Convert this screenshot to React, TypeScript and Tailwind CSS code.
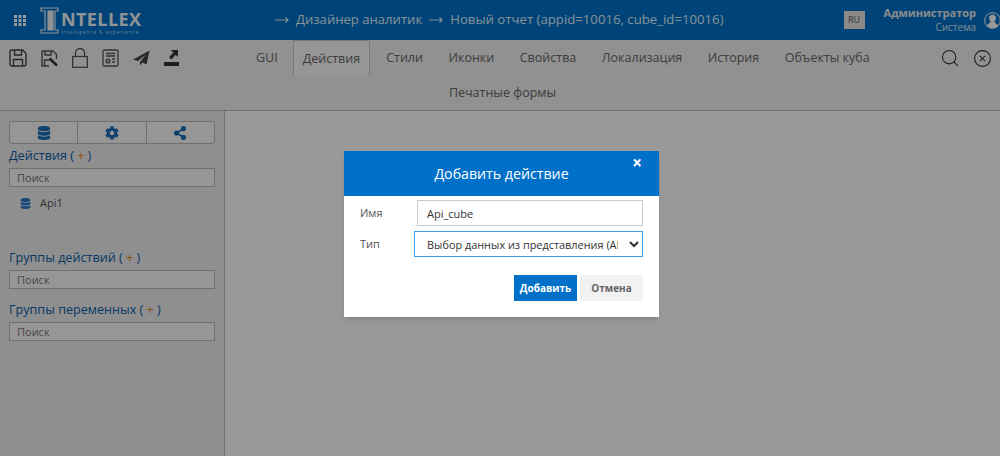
import React from "react";
import { Search, CircleX } from "lucide-react";
import { FaCog, FaDatabase, FaShareAlt } from "react-icons/fa";

const tabs = ["Стили", "Иконки", "Свойства", "Локализация", "История", "Объекты куба"];

const Arrow = () => (
    <svg width="14" height="8" viewBox="0 0 14 8" fill="none" stroke="currentColor" strokeWidth="1.2">
        <path d="M0 4h13M10.500 1.500 13 4l-2.500 2.500" />
    </svg>
);

const GridIcon = () => (
    <svg width="12" height="11" viewBox="0 0 12 11" fill="#fff">
        {[0, 4, 8].map((y) =>
            [0, 4.5, 9].map((x) => <rect key={`${x}-${y}`} x={x} y={y} width="3" height="3" />),
        )}
    </svg>
);

const Logo = () => (
    <div className="flex items-start h-[28px] w-[102px] shrink-0 text-white">
        <svg width="20" height="28" viewBox="0 0 20 28" fill="none" stroke="#eef4f8" strokeWidth="1.200" className="shrink-0">
            <path d="M1 2h17v3h-3v19h3v3H1v-3h4V5H1z" />
            <path d="M8 5h5v19H8z" fill="#eef4f8" />
        </svg>
        <div className="ml-[1px] flex flex-col items-start">
            <span className="text-[18px] leading-[19px] mt-[4px] font-bold tracking-[0.400px] text-[#f2f5f7]">NTELLEX</span>
            <span className="text-[5.500px] leading-[6px] tracking-[0.550px] text-[#9fd0f0] whitespace-nowrap">
                Intelligence &amp; experience
            </span>
        </div>
    </div>
);

const SaveIcon = () => (
    <svg width="18" height="18" viewBox="0 0 18 18" fill="none" stroke="#444" strokeWidth="1.400">
        <path d="M2.500 1h11L17 4.500V15a2 2 0 0 1-2 2H3a2 2 0 0 1-2-2V2.500A1.500 1.500 0 0 1 2.500 1z" />
        <path d="M5.500 1v5h7V1M4.500 17v-6.500h9V17" />
    </svg>
);

const SaveEditIcon = () => (
    <svg width="17" height="17" viewBox="0 0 17 17" fill="none" stroke="#555" strokeWidth="1.400">
        <path d="M1 1h11l3.500 3.500V9M8 16H1V1" />
        <path d="M4 1v4h6V1" />
        <path d="M3.500 16v-6h5" />
        <path d="m8.500 8.500 7.500 7" strokeWidth="2.600" stroke="#333" />
    </svg>
);

const LockIcon = () => (
    <svg width="16" height="20" viewBox="0 0 16 20" fill="none" stroke="#555" strokeWidth="1.300">
        <rect x="0.700" y="8.500" width="14.600" height="10.800" />
        <path d="M3.500 8.500V5a4.500 4.500 0 0 1 9 0v3.500" />
    </svg>
);

const DocGearIcon = () => (
    <svg width="17" height="18" viewBox="0 0 17 18" fill="none" stroke="#555" strokeWidth="1.300">
        <rect x="1" y="1" width="15" height="16" rx="1.500" />
        <path d="M4 4.500h9M4 7h9M10 10h3M10 13h3" />
        <circle cx="6" cy="12" r="1.800" strokeWidth="1.500" />
    </svg>
);

const PlaneIcon = () => (
    <svg width="17" height="16" viewBox="0 0 17 16" fill="#444">
        <path d="M16.500 0.500 0 9.500l5 1.500L13 4.500 7 12v3.500l2.500-3 4 2z" />
    </svg>
);

const ExportIcon = () => (
    <svg width="15" height="16" viewBox="0 0 15 16" fill="#333">
        <rect x="0" y="12" width="15" height="4" />
        <path d="M6.500 0H14v7l-2.300-2.300L7.500 9.500 5 7l4.500-4.400z" />
    </svg>
);

const SearchField = () => (
    <input
        readOnly
        placeholder="Поиск"
        className="block w-[206px] h-[19px] border border-[#bbb] bg-[#fbfbfb] px-[7px] text-[11px] placeholder:text-[#777] outline-none"
    />
);

const Heading: React.FC<{ title: string }> = ({ title }) => (
    <div className="text-[12.600px] leading-[18px] text-[#0a5fa8]">
        {title} ( <span className="text-[#e68a1f]">+</span> )
    </div>
);

export default function App() {
    return (
        <div className="relative w-[1000px] h-[456px] overflow-hidden bg-[#f2f2f2] font-['Open_Sans',sans-serif]">
            <header className="flex items-center h-10 bg-[#0070c8] text-white">
                <div className="ml-[14px] mr-[14px] flex">
                    <GridIcon />
                </div>
                <Logo />
                <div className="ml-[133px] shrink-0 flex items-center gap-[7px] whitespace-nowrap text-[#dff0fb]">
                    <Arrow />
                    <span className="text-[13.100px]">Дизайнер аналитик</span>
                    <Arrow />
                    <span className="text-[13.200px]">Новый отчет (appid=10016, cube_id=10016)</span>
                </div>
                <span className="ml-[120px] shrink-0 flex items-center justify-center w-[21px] h-[18px] bg-[#e6e6e6] text-[#555] text-[9px]">
                    RU
                </span>
                <div className="ml-[19px] shrink-0 flex flex-col items-end leading-[14px]">
                    <span className="text-[11px] font-bold text-[#e8e8e8]">Администратор</span>
                    <span className="text-[10px] text-[#d5e8f5]">Система</span>
                </div>
                <svg width="17" height="17" viewBox="0 0 17 17" fill="none" stroke="#fff" strokeWidth="1" className="ml-[8px] shrink-0">
                    <circle cx="8.500" cy="8.500" r="7.800" />
                    <path d="M3.500 14c.5-2.500 2.500-3 3.500-3.500v-1C6 8.500 5.500 7 5.500 5.500 5.500 4 7 3 8.500 3s3 1 3 2.500c0 1.500-.5 3-1.500 4v1c1 .5 3 1 3.500 3.500a7.800 7.800 0 0 1-10 0z" fill="#fff" />
                </svg>
            </header>

            <div className="h-[71px] border-b border-[#bbb] bg-[#f2f2f2]">
                <div className="flex h-9">
                    <div className="flex items-center gap-[14px] ml-[9px] w-[246px] text-[#555] shrink-0">
                        <SaveIcon />
                        <SaveEditIcon />
                        <LockIcon />
                        <DocGearIcon />
                        <PlaneIcon />
                        <ExportIcon />
                    </div>
                    <nav className="flex text-[12.500px] text-[#666]">
                        <span className="flex items-center pt-[1px] px-[1px] mr-[14px]">GUI</span>
                        <span className="flex items-center pt-[1px] px-[9px] bg-[#fafafa] border-x border-t border-[#ccc] mr-[16px]">Действия</span>
                        {tabs.map((tab) => (
                            <span key={tab} className="flex items-center pt-[1px] mr-[25.500px] whitespace-nowrap">{tab}</span>
                        ))}
                    </nav>
                    <div className="flex items-center gap-[13px] ml-[45px] text-[#333]">
                        <Search size={20} strokeWidth={1.300} />
                        <CircleX size={19} strokeWidth={1.400} />
                    </div>
                </div>
                <div className="flex justify-center pt-[8px] text-[12.500px] leading-[18px] text-[#666] pl-[5px]">
                    Печатные формы
                </div>
            </div>

            <div className="flex h-[345px]">
                <aside className="w-[225px] h-full border-r border-[#bbb] bg-[#eeeeee] px-[9px] pt-[10px]">
                    <div className="flex w-[206px] h-[23px] border border-[#bbb] rounded-[3px] bg-[#fbfbfb] text-[#1a6fb8] text-[14px]">
                        <span className="flex flex-1 items-center justify-center"><FaDatabase /></span>
                        <span className="flex flex-1 items-center justify-center border-x border-[#bbb]"><FaCog /></span>
                        <span className="flex flex-1 items-center justify-center"><FaShareAlt /></span>
                    </div>
                    <div className="mt-[3px] mb-[3px]"><Heading title="Действия" /></div>
                    <SearchField />
                    <div className="flex items-center gap-[9px] ml-[11px] mt-[7px] text-[11px] leading-[18px] text-[#555]">
                        <FaDatabase className="text-[#2a78c8] text-[11px]" />
                        Api1
                    </div>
                    <div className="mt-[37px] mb-[3px]"><Heading title="Группы действий" /></div>
                    <SearchField />
                    <div className="mt-[12px] mb-[3px]"><Heading title="Группы переменных" /></div>
                    <SearchField />
                </aside>
                <main className="flex-1 bg-[#ffffff]" />
            </div>

            <div className="absolute inset-0 bg-black/40 flex items-start pt-[151px] pl-[344px]">
                <div className="w-[315px] h-[166px] bg-white shadow-md">
                    <div className="relative flex items-center justify-center h-[45px] bg-[#0070c8] text-white text-[14.200px] font-medium">
                        Добавить действие
                        <span className="absolute right-[17px] top-[2px] text-[17px] font-bold leading-[20px]">×</span>
                    </div>
                    <div className="px-[16px] pt-[4px]">
                        <label className="flex items-center text-[11px] text-[#555]">
                            <span className="w-[57px]">Имя</span>
                            <input readOnly value="Api_cube" className="w-[226px] h-[26px] border border-[#ccc] px-[9px] text-[11px] text-[#333] outline-none" />
                        </label>
                        <label className="flex items-center mt-[5px] text-[11px] text-[#555]">
                            <span className="w-[54px]">Тип</span>
                            <select className="w-[229px] h-[26px] border border-[#3d9fe8] px-[8px] text-[10.900px] text-[#333] outline-none bg-white">
                                <option>Выбор данных из представления (API)</option>
                            </select>
                        </label>
                        <div className="flex justify-end gap-[3px] mt-[18px]">
                            <button className="w-[63px] h-[26px] bg-[#0070c8] text-white text-[10px] font-bold">Добавить</button>
                            <button className="w-[63px] h-[26px] bg-[#f2f2f2] text-[#666] text-[10px] font-bold">Отмена</button>
                        </div>
                    </div>
                </div>
            </div>
        </div>
    );
}
